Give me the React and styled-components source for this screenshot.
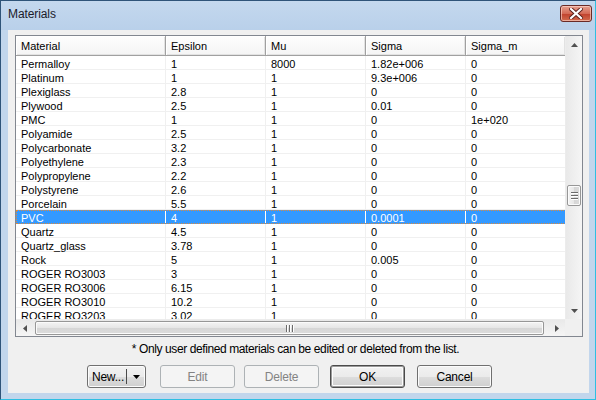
import React from "react";
import styled, { createGlobalStyle } from "styled-components";

const Global = createGlobalStyle`
  html, body { margin: 0; padding: 0; background: #ffffff; }
  body { font-family: "Liberation Sans", Arial, sans-serif; }
  * { box-sizing: border-box; }
`;

const Window = styled.div`
  width: 596px;
  height: 400px;
  display: flex;
  flex-direction: column;
  background: linear-gradient(#c4d8ee, #b9d0ea 29px, #c2d6ec 29px, #c2d6ec);
  border: 1px solid #2f5479;
  border-right-color: #2fbfe2;
  border-bottom-color: #2fbfe2;
  overflow: hidden;
`;

const TitleBar = styled.div`
  height: 29px;
  flex: none;
  display: flex;
  align-items: flex-start;
  justify-content: space-between;
  padding: 6px 3px 0 7px;
`;

const Title = styled.span`
  font-size: 12px;
  line-height: 15px;
  color: #1b1b2a;
  letter-spacing: -0.1px;
`;

const CloseButton = styled.div`
  width: 32px;
  height: 17px;
  margin-top: -2px;
  border: 1px solid #6a2a26;
  border-radius: 3px;
  background: linear-gradient(#e6a08f, #d46a56 50%, #c0402d 51%, #d26b4e);
  box-shadow: inset 0 0 0 1px rgba(255, 220, 210, 0.6);
  display: flex;
  align-items: center;
  justify-content: center;
`;

const Client = styled.div`
  flex: 1;
  margin: 0 6px 6px 7px;
  background: #f0f0f0;
  display: flex;
  flex-direction: column;
  padding: 5px 5px 0 7px;
`;

const Grid = styled.div`
  width: 568px;
  height: 302px;
  border: 1px solid #828790;
  background: #ffffff;
  display: grid;
  grid-template-columns: 549px 17px;
  grid-template-rows: 283px 17px;
`;

const TableArea = styled.div`
  overflow: hidden;
  display: flex;
  flex-direction: column;
`;

const HeaderRow = styled.div`
  display: flex;
  height: 20px;
  flex: none;
  width: 550px;
`;

const HeaderCell = styled.div`
  width: ${(p) => p.$w}px;
  flex: none;
  height: 20px;
  padding: 4px 0 0 5px;
  font-size: 11px;
  line-height: 12px;
  color: #000;
  background: linear-gradient(#fefefe, #f4f4f4);
  border-right: 1px solid #a0a0a0;
  border-bottom: 1px solid #a0a0a0;
  box-shadow: inset 1px 1px #ffffff, inset -1px -1px #e2e2e2;
  white-space: nowrap;
`;

const Row = styled.div`
  display: flex;
  height: 14px;
  flex: none;
  width: 550px;
  background: ${(p) => (p.$sel ? "#3399ff" : "#ffffff")};
  color: ${(p) => (p.$sel ? "#ffffff" : "#000000")};
  outline: ${(p) => (p.$sel ? "1px dotted #e08a3a" : "none")};
  outline-offset: -1px;
`;

const Cell = styled.div`
  width: ${(p) => p.$w}px;
  flex: none;
  height: 14px;
  padding: 0 0 0 5px;
  font-size: 11px;
  line-height: 16px;
  border-right: 1px solid ${(p) => (p.$sel ? "#ffffff" : "#f0f0f0")};
  border-bottom: 1px solid ${(p) => (p.$sel ? "#3399ff" : "#f0f0f0")};
  white-space: nowrap;
`;

const VScroll = styled.div`
  background: linear-gradient(90deg, #e9e9e9, #f5f5f5);
  display: flex;
  flex-direction: column;
  border-left: 1px solid #ececec;
`;

const HScroll = styled.div`
  background: linear-gradient(#e9e9e9, #f5f5f5);
  display: flex;
  align-items: stretch;
  border-top: 1px solid #ececec;
`;

const Corner = styled.div`
  background: #f0f0f0;
`;

const ArrowBox = styled.div`
  width: ${(p) => (p.$h ? "17px" : "100%")};
  height: ${(p) => (p.$h ? "100%" : "17px")};
  flex: none;
  display: flex;
  align-items: center;
  justify-content: center;
`;

const Track = styled.div`
  flex: 1;
  display: flex;
  flex-direction: ${(p) => (p.$h ? "row" : "column")};
`;

const Thumb = styled.div`
  border: 1px solid #979797;
  border-radius: 2px;
  background: ${(p) =>
    p.$h
      ? "linear-gradient(#f4f4f4, #e6e6e6 50%, #d6d6d6 51%, #dcdcdc)"
      : "linear-gradient(90deg, #f4f4f4, #e6e6e6 50%, #d6d6d6 51%, #dcdcdc)"};
  box-shadow: inset 0 0 0 1px #fbfbfb;
  display: flex;
  align-items: center;
  justify-content: center;
  flex: none;
  margin: ${(p) => (p.$h ? "1px 0 1px 2px" : "132px 1px 0")};
`;

const Note = styled.div`
  margin-top: 5px;
  height: 14px;
  font-size: 12px;
  line-height: 14px;
  letter-spacing: -0.4px;
  text-align: center;
  color: #000;
  padding-right: 8px;
`;

const ButtonRow = styled.div`
  display: flex;
  margin-top: 9px;
  padding-left: 72px;
`;

const Button = styled.div`
  width: ${(p) => p.$w || 75}px;
  height: 23px;
  margin-left: ${(p) => p.$ml || 0}px;
  border: 1px solid ${(p) => (p.$disabled ? "#adb2b5" : p.$default ? "#4b4b4b" : "#707070")};
  border-radius: 3px;
  background: ${(p) =>
    p.$disabled
      ? "#f4f4f4"
      : "linear-gradient(#f2f2f2, #ebebeb 50%, #dddddd 51%, #cfcfcf)"};
  box-shadow: ${(p) =>
    p.$disabled
      ? "none"
      : p.$default
      ? "inset 0 0 0 1px #9a9a9a, inset 0 0 0 2px #fcfcfc"
      : "inset 0 0 0 1px #fcfcfc"};
  color: ${(p) => (p.$disabled ? "#838383" : "#000")};
  font-size: 12px;
  display: flex;
  align-items: center;
  justify-content: center;
  letter-spacing: -0.2px;
`;

const SplitLabel = styled.span`
  flex: 1;
  text-align: center;
  padding-left: 2px;
`;

const SplitDivider = styled.span`
  width: 1px;
  height: 15px;
  background: #4a4a4a;
`;

const SplitArrow = styled.span`
  width: 18px;
  display: flex;
  justify-content: center;
`;

const cols = [
  ["Material", 150],
  ["Epsilon", 100],
  ["Mu", 100],
  ["Sigma", 100],
  ["Sigma_m", 100],
];

const rows = [
  ["Permalloy", "1", "8000", "1.82e+006", "0"],
  ["Platinum", "1", "1", "9.3e+006", "0"],
  ["Plexiglass", "2.8", "1", "0", "0"],
  ["Plywood", "2.5", "1", "0.01", "0"],
  ["PMC", "1", "1", "0", "1e+020"],
  ["Polyamide", "2.5", "1", "0", "0"],
  ["Polycarbonate", "3.2", "1", "0", "0"],
  ["Polyethylene", "2.3", "1", "0", "0"],
  ["Polypropylene", "2.2", "1", "0", "0"],
  ["Polystyrene", "2.6", "1", "0", "0"],
  ["Porcelain", "5.5", "1", "0", "0"],
  ["PVC", "4", "1", "0.0001", "0"],
  ["Quartz", "4.5", "1", "0", "0"],
  ["Quartz_glass", "3.78", "1", "0", "0"],
  ["Rock", "5", "1", "0.005", "0"],
  ["ROGER RO3003", "3", "1", "0", "0"],
  ["ROGER RO3006", "6.15", "1", "0", "0"],
  ["ROGER RO3010", "10.2", "1", "0", "0"],
  ["ROGER RO3203", "3.02", "1", "0", "0"],
];

const Tri = ({ dir, color = "#505050", size = 7 }) => {
  const pts = {
    up: "0,4 3.5,0 7,4",
    down: "0,0 7,0 3.5,4",
    left: "4,0 4,7 0,3.5",
    right: "0,0 0,7 4,3.5",
  }[dir];
  const horiz = dir === "left" || dir === "right";
  return (
    <svg width={horiz ? 4 : size} height={horiz ? size : 4} viewBox={horiz ? "0 0 4 7" : "0 0 7 4"}>
      <polygon points={pts} fill={color} />
    </svg>
  );
};

const Grip = ({ h }) => (
  <svg width={h ? 8 : 7} height={h ? 7 : 8} viewBox={h ? "0 0 8 7" : "0 0 7 8"}>
    {[0, 3, 6].map((o) =>
      h ? (
        <g key={o}>
          <rect x={o} y={0} width={1} height={7} fill="#6b6b6b" />
          <rect x={o + 1} y={0} width={1} height={7} fill="#ffffff" />
        </g>
      ) : (
        <g key={o}>
          <rect x={0} y={o} width={7} height={1} fill="#6b6b6b" />
          <rect x={0} y={o + 1} width={7} height={1} fill="#ffffff" />
        </g>
      )
    )}
  </svg>
);

export default function App() {
  return (
    <>
      <Global />
      <Window>
        <TitleBar>
          <Title>Materials</Title>
          <CloseButton>
            <svg width="14" height="11" viewBox="0 0 14 11">
              <path d="M2 1 L12 10 M12 1 L2 10" stroke="#5a1f1a" strokeWidth="4" strokeLinecap="square" />
              <path d="M2 1 L12 10 M12 1 L2 10" stroke="#ffffff" strokeWidth="2.2" strokeLinecap="square" />
            </svg>
          </CloseButton>
        </TitleBar>
        <Client>
          <Grid>
            <TableArea>
              <HeaderRow>
                {cols.map(([n, w]) => (
                  <HeaderCell key={n} $w={w}>
                    {n}
                  </HeaderCell>
                ))}
              </HeaderRow>
              {rows.map((r) => {
                const sel = r[0] === "PVC";
                return (
                  <Row key={r[0]} $sel={sel}>
                    {r.map((v, i) => (
                      <Cell key={i} $w={cols[i][1]} $sel={sel}>
                        {v}
                      </Cell>
                    ))}
                  </Row>
                );
              })}
            </TableArea>
            <VScroll>
              <ArrowBox>
                <Tri dir="up" />
              </ArrowBox>
              <Track>
                <Thumb style={{ height: 21 }}>
                  <Grip />
                </Thumb>
              </Track>
              <ArrowBox>
                <Tri dir="down" />
              </ArrowBox>
            </VScroll>
            <HScroll>
              <ArrowBox $h>
                <Tri dir="left" />
              </ArrowBox>
              <Track $h>
                <Thumb $h style={{ width: 509 }}>
                  <Grip h />
                </Thumb>
              </Track>
              <ArrowBox $h>
                <Tri dir="right" />
              </ArrowBox>
            </HScroll>
            <Corner />
          </Grid>
          <Note>* Only user defined materials can be edited or deleted from the list.</Note>
          <ButtonRow>
            <Button $w={59}>
              <SplitLabel>New...</SplitLabel>
              <SplitDivider />
              <SplitArrow>
                <Tri dir="down" color="#000" size={7} />
              </SplitArrow>
            </Button>
            <Button $ml={14} $disabled>
              Edit
            </Button>
            <Button $ml={9} $disabled>
              Delete
            </Button>
            <Button $ml={11} $default>
              OK
            </Button>
            <Button $ml={12}>Cancel</Button>
          </ButtonRow>
        </Client>
      </Window>
    </>
  );
}
